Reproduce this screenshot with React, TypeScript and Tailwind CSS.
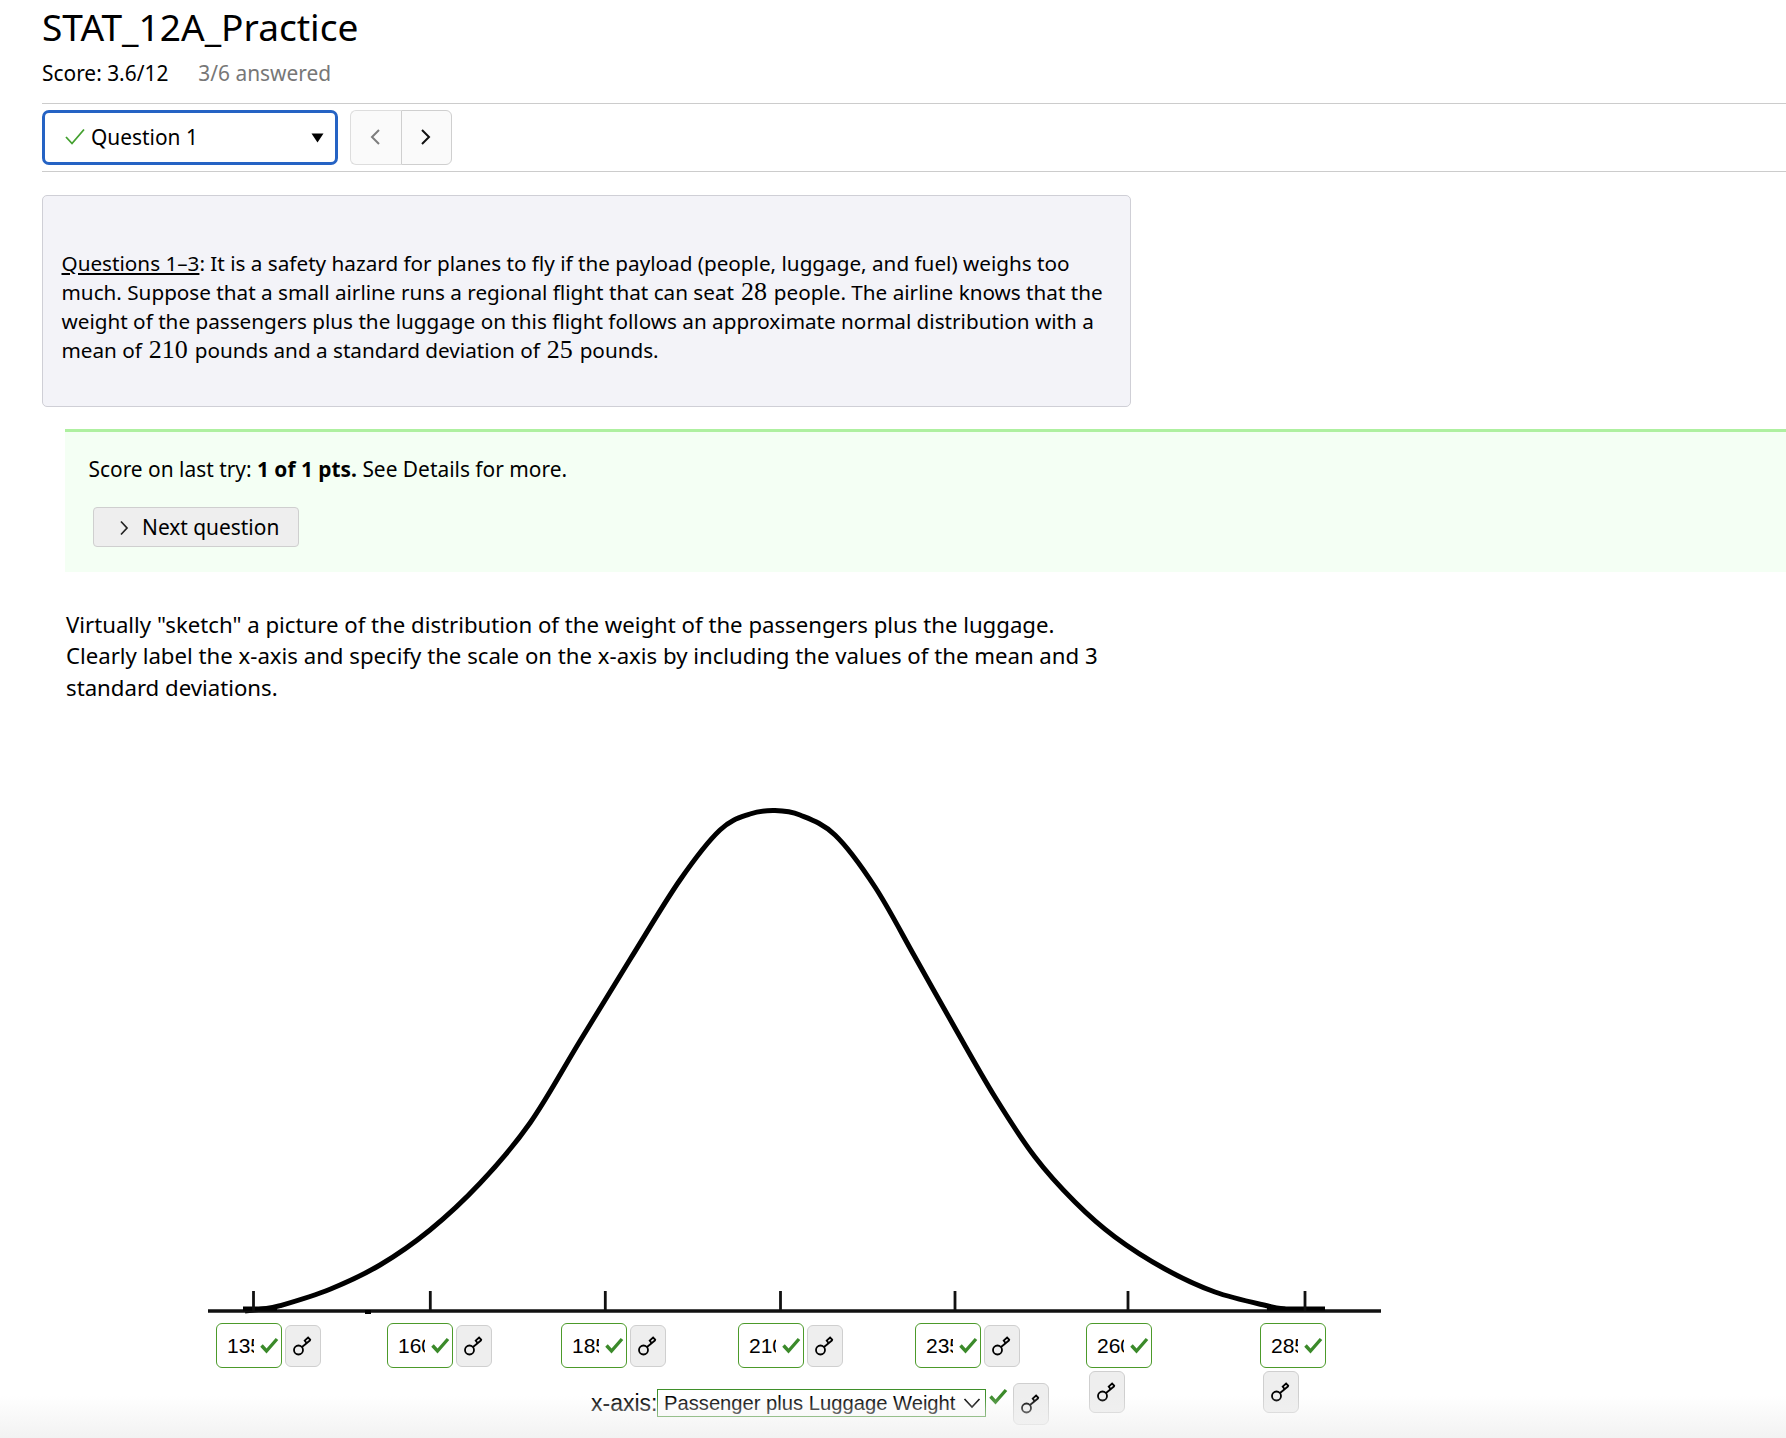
function CheckIcon() {
  return (
    <svg className="h-[20px] w-[20px] shrink-0" viewBox="0 0 20 20" fill="none">
      <path d="M2.5 10.5l5 5.5L18 4" stroke="#3b8a2a" strokeWidth="3.4" />
    </svg>
  );
}

function KeyIcon() {
  return (
    <svg className="h-[22px] w-[22px]" viewBox="0 0 22 22" fill="none" stroke="#000" strokeWidth="1.8">
      <circle cx="6.5" cy="15" r="4.5" />
      <path d="M10 12L18.5 5" />
      <path d="M14.5 8l-1.8-2.4 3.4-3 2.6 2.6" />
    </svg>
  );
}

const keyBase =
  "absolute flex items-center justify-center rounded-[6px] border border-[#cfcfcf] bg-[#eeeeee]";

const answers = [
  { value: "135", input: "left-[216px]", key: "left-[285px] top-[545px]" },
  { value: "160", input: "left-[387px]", key: "left-[456px] top-[545px]" },
  { value: "185", input: "left-[561px]", key: "left-[630px] top-[545px]" },
  { value: "210", input: "left-[738px]", key: "left-[807px] top-[545px]" },
  { value: "235", input: "left-[915px]", key: "left-[984px] top-[545px]" },
  { value: "260", input: "left-[1086px]", key: "left-[1089px] top-[591px]" },
  { value: "285", input: "left-[1260px]", key: "left-[1263px] top-[591px]" },
];

// read off the reference curve, x and y inside the chart box
const bell: [number, number][] = [
  [245, 531], [262, 529], [280, 525.7], [330, 509.2], [380, 485], [430, 450], [480, 403.3], [530, 343],
  [580, 261], [630, 179.5], [680, 100], [720, 50], [750, 34], [775, 30.5], [800, 35], [835, 55], [875, 107],
  [915, 177], [955, 248], [995, 317], [1035, 377], [1075, 422], [1115, 457], [1165, 489], [1215, 512],
  [1268, 526], [1285, 529],
];

function bellPath() {
  let d = `M${bell[0][0]} ${bell[0][1]}`;
  for (let i = 0; i < bell.length - 1; i++) {
    const p0 = bell[Math.max(i - 1, 0)];
    const p1 = bell[i];
    const p2 = bell[i + 1];
    const p3 = bell[Math.min(i + 2, bell.length - 1)];
    const c1x = p1[0] + (p2[0] - p0[0]) / 6;
    const c1y = p1[1] + (p2[1] - p0[1]) / 6;
    const c2x = p2[0] - (p3[0] - p1[0]) / 6;
    const c2y = p2[1] - (p3[1] - p1[1]) / 6;
    d += `C${c1x.toFixed(1)} ${c1y.toFixed(1)} ${c2x.toFixed(1)} ${c2y.toFixed(1)} ${p2[0]} ${p2[1]}`;
  }
  return d;
}

function Chart() {
  return (
    <div className="relative mt-[77px] h-[658px] w-full">
      <svg className="absolute left-0 top-0 h-[658px] w-[1786px]" viewBox="0 0 1786 658" fill="none">
        <path d={bellPath()} stroke="#000" strokeWidth="5" />
        <path d="M208 531H1381" stroke="#111" strokeWidth="3.4" />
        <path d="M243 528.5H277M1267 528.5H1325" stroke="#000" strokeWidth="4" />
        <path d="M365 532H371" stroke="#000" strokeWidth="4" />
        {[253.5, 430.3, 605.3, 780.5, 955, 1128, 1305].map((x) => (
          <path key={x} d={`M${x} 511V531`} stroke="#111" strokeWidth="2.8" />
        ))}
      </svg>

      {answers.map((a) => (
        <div key={a.value}>
          <div
            className={`absolute top-[543px] flex h-[45px] w-[66px] items-center rounded-[6px] border border-[#4c9a2a] bg-white pl-[10px] ${a.input}`}
          >
            <span className="w-[27px] overflow-hidden font-['Liberation_Sans',sans-serif] text-[21px] leading-none text-black">
              {a.value}
            </span>
            <span className="ml-[5px]">
              <CheckIcon />
            </span>
          </div>
          <div className={`${keyBase} h-[42px] w-[36px] ${a.key}`}>
            <KeyIcon />
          </div>
        </div>
      ))}

      <div className="absolute left-[591px] top-[610px] flex items-center font-['Liberation_Sans',sans-serif] text-black">
        <span className="text-[23px] leading-[27px]">x-axis:</span>
      </div>
      <div className="absolute left-[657px] top-[609px] flex h-[28px] w-[329px] items-center justify-between border-[1.5px] border-[#3f8f2a] bg-white pl-[6px] pr-[4px] font-['Liberation_Sans',sans-serif] text-[20.2px] text-black">
        <span className="whitespace-nowrap">Passenger plus Luggage Weight</span>
        <svg className="h-[12px] w-[18px]" viewBox="0 0 18 12" fill="none">
          <path d="M1.5 2l7.5 8 7.5-8" stroke="#000" strokeWidth="1.6" />
        </svg>
      </div>
      <div className="absolute left-[988px] top-[606px]">
        <CheckIcon />
      </div>
      <div className={`${keyBase} left-[1013px] top-[603px] h-[42px] w-[36px]`}>
        <KeyIcon />
      </div>
    </div>
  );
}

const mathClass = "mx-[1.5px] font-['Liberation_Serif',serif] text-[26px] leading-none";

export default function App() {
  return (
    <div className="relative h-[1438px] w-[1786px] overflow-hidden bg-white pl-[42px] font-['Noto_Sans',sans-serif] text-black">
      <h1 className="h-[55px] pt-[2px] text-[37.1px] leading-[50px] font-normal">STAT_12A_Practice</h1>
      <div className="flex h-[36px] items-center gap-[30px] pt-[2px] text-[20.9px]">
        <span>Score: 3.6/12</span>
        <span className="text-[#777777]">3/6 answered</span>
      </div>
      <div className="mt-[12px] flex h-[69px] items-start gap-[12px] border-y border-[#cccccc] pt-[6px]">
        <div className="flex h-[55px] w-[296px] items-center rounded-[7px] border-[3px] border-[#2563c4] pl-[19px] pr-[11px] text-[20.9px]">
          <svg className="mr-[5px] h-[22px] w-[22px]" viewBox="0 0 22 22" fill="none">
            <path d="M2 10l6 6.5L20 2.5" stroke="#43a02f" strokeWidth="1.8" />
          </svg>
          <span>Question 1</span>
          <svg className="ml-auto h-[10px] w-[13px]" viewBox="0 0 13 10">
            <path d="M0.5 0.5h12L6.5 9.5z" fill="#000" />
          </svg>
        </div>
        <div className="flex h-[55px]">
          <div className="flex w-[51px] items-center justify-center rounded-l-[6px] border border-r-0 border-[#dddddd] bg-[#fafafa] pb-[2px] pr-[2px]">
            <svg className="h-[18px] w-[12px]" viewBox="0 0 12 18" fill="none">
              <path d="M10 2L3 9l7 7" stroke="#7d7d7d" strokeWidth="2" />
            </svg>
          </div>
          <div className="flex w-[51px] items-center justify-center rounded-r-[6px] border border-[#cfcfcf] bg-[#fafafa] pb-[2px] pr-[2px]">
            <svg className="h-[18px] w-[12px]" viewBox="0 0 12 18" fill="none">
              <path d="M2 2l7 7-7 7" stroke="#111" strokeWidth="2" />
            </svg>
          </div>
        </div>
      </div>

      <div className="mt-[23px] flex h-[212px] w-[1089px] items-center rounded-[5px] border border-[#cfcfd6] bg-[#f3f3f8] px-[18.5px] pt-[12px] text-[20.7px] leading-[29px]">
        <p>
          <span className="underline">Questions 1–3</span>: It is a safety hazard for planes to fly if the payload
          (people, luggage, and fuel) weighs too much. Suppose that a small airline runs a regional flight that can
          seat <span className={mathClass}>28</span> people. The airline knows that the weight of the passengers plus
          the luggage on this flight follows an approximate normal distribution with a mean of{" "}
          <span className={mathClass}>210</span> pounds and a standard deviation of{" "}
          <span className={mathClass}>25</span> pounds.
        </p>
      </div>

      <div className="ml-[23px] mt-[22px] h-[143px] border-t-[3px] border-[#aef0a0] bg-[#f4fff4] pl-[23.5px] text-[20.9px]">
        <p className="pt-[22px] leading-[30px]">
          Score on last try: <b className="font-bold">1 of 1 pts.</b> See Details for more.
        </p>
        <div className="ml-[4.5px] mt-[23px] flex h-[40px] w-[206px] items-center rounded-[4px] border border-[#cfcfcf] bg-[#eeeeee] pl-[25px] pt-[1px]">
          <svg className="mr-[13px] h-[16px] w-[10px]" viewBox="0 0 10 16" fill="none">
            <path d="M2 1.5L8 8l-6 6.5" stroke="#222" strokeWidth="1.7" />
          </svg>
          <span>Next question</span>
        </div>
      </div>

      <p className="ml-[24px] mt-[37px] w-[1050px] text-[22.2px] leading-[31.3px]">
        Virtually "sketch" a picture of the distribution of the weight of the passengers plus the luggage. Clearly label
        the x-axis and specify the scale on the x-axis by including the values of the mean and 3 standard deviations.
      </p>

      <div className="-ml-[42px]">
        <Chart />
      </div>

      <div className="absolute bottom-0 left-0 h-[42px] w-full bg-gradient-to-b from-transparent to-[#f2f2f2]" />
    </div>
  );
}
